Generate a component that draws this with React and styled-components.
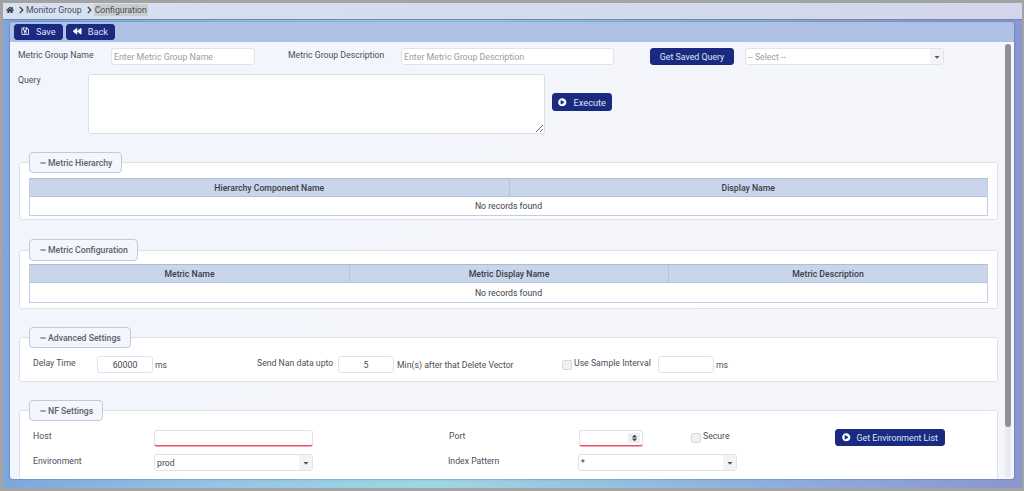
import React from 'react';
import styled, { createGlobalStyle } from 'styled-components';
import { FaHome, FaChevronRight, FaRegSave, FaBackward, FaPlayCircle, FaMinus, FaCaretDown, FaSort } from 'react-icons/fa';

const GlobalStyle = createGlobalStyle`
    html, body {
        margin: 0;
        padding: 0;
        height: 100%;
        overflow: hidden;
    }
    * {
        box-sizing: border-box;
    }
    body {
        font-family: Roboto, "Liberation Sans", sans-serif;
        font-size: 8.7px;
        color: #4b4f57;
    }
`;

const Page = styled.div`
    width: 1024px;
    height: 491px;
    border: solid #a3a3a3;
    border-width: 3px 2px 3px 3px;
    background: linear-gradient(90deg, #7ea6dc 0%, #93c4e4 20%, #a0d6e2 42%, #8fb4de 70%, #8b97d0 100%);
    display: flex;
    flex-direction: column;
    overflow: hidden;
`;

const Breadcrumb = styled.div`
    height: 17px;
    flex: none;
    background: linear-gradient(90deg, #d6e1f2, #d3d6ea);
    border-bottom: 1px solid #7088ad;
    display: flex;
    align-items: center;
    padding: 0 0 3px 3px;
    color: #4a4d55;
    font-size: 8.7px;
    svg {
        flex: none;
        color: #33363d;
    }
`;

const Chevron = styled(FaChevronRight)`
    width: 7px;
    height: 8px;
    margin: 1px 1px 0 4px;
`;

const Current = styled.span`
    background: #c9cbce;
    padding: 0 1px;
    line-height: 12px;
`;

const Panel = styled.div`
    flex: 1;
    min-height: 0;
    margin: 2px 8px 9px 7px;
    border-radius: 4px 4px 3px 3px;
    background: linear-gradient(135deg, #f2f5fc, #f5f6fb);
    box-shadow: 0 0 2px #46608e;
    display: flex;
    flex-direction: column;
    overflow: hidden;
    position: relative;
`;

const Toolbar = styled.div`
    height: 20px;
    flex: none;
    background: #aec0e3;
    display: flex;
    align-items: center;
    gap: 3px;
    padding: 0 0 1px 4px;
`;

const Button = styled.button`
    height: ${(p) => p.$h || 16}px;
    width: ${(p) => p.$w}px;
    margin: ${(p) => p.$margin || 0};
    flex: none;
    border: 1px solid #1b2a80;
    border-radius: 3px;
    background: #1a2a80;
    color: #dfe4f4;
    font: inherit;
    font-size: ${(p) => p.$fs || 8.8}px;
    padding: 0;
    display: inline-flex;
    align-items: center;
    justify-content: center;
    gap: ${(p) => p.$gap || 6}px;
    svg {
        width: 8.5px;
        height: 8.5px;
        flex: none;
        color: #fff;
    }
`;

const Body = styled.div`
    flex: 1;
    min-height: 0;
    overflow: hidden;
    padding: 6px 0 0 8px;
`;

const ScrollTrack = styled.div`
    position: absolute;
    top: 22px;
    right: 3px;
    bottom: 1px;
    width: 6px;
    background: #e9ebf0;
    border-radius: 3px;
`;

const ScrollThumb = styled.div`
    height: 383px;
    background: #918f8f;
    border-radius: 3px;
`;

const Row = styled.div`
    display: flex;
    align-items: ${(p) => p.$align || 'center'};
    height: ${(p) => p.$h || 17}px;
    margin-top: ${(p) => p.$mt || 0}px;
`;

const Label = styled.label`
    flex: none;
    width: ${(p) => (p.$w ? `${p.$w}px` : 'auto')};
    margin-left: ${(p) => p.$ml || 0}px;
    margin-top: ${(p) => p.$mt || 0}px;
    color: #4b4f57;
    white-space: nowrap;
`;

const Input = styled.input`
    flex: none;
    width: ${(p) => p.$w}px;
    height: ${(p) => p.$h || 17}px;
    margin-left: ${(p) => p.$ml || 0}px;
    border: 1px solid #e0e3ea;
    border-bottom-color: ${(p) => (p.$invalid ? '#ee4d68' : '#e0e3ea')};
    box-shadow: ${(p) => (p.$invalid ? '0 1px 0 #f7a3b2' : 'none')};
    border-radius: 3px;
    background: #fff;
    font: inherit;
    font-size: 8.8px;
    color: #44474e;
    padding: 0 2px;
    text-align: ${(p) => p.$align || 'left'};
    outline: none;
    &::placeholder {
        color: #9a9da3;
        opacity: 1;
    }
`;

const Query = styled.textarea`
    flex: none;
    width: 457px;
    height: 60px;
    border: 1px solid #dcdfe6;
    border-radius: 3px;
    background: #fff;
    outline: none;
    resize: both;
`;

const Select = styled.div`
    flex: none;
    width: ${(p) => p.$w}px;
    height: 17px;
    margin-left: ${(p) => p.$ml || 0}px;
    border: 1px solid #e0e3ea;
    border-radius: 3px;
    background: #fff;
    display: flex;
    align-items: center;
    justify-content: space-between;
    padding-left: 2px;
    overflow: hidden;
    color: ${(p) => (p.$muted ? '#9a9da3' : '#44474e')};
`;

const Caret = styled.span`
    width: 13px;
    height: 100%;
    background: #f3f4f6;
    display: flex;
    align-items: center;
    justify-content: center;
    color: #55585f;
    svg {
        width: 8px;
        height: 8px;
    }
`;

const Spinner = styled.div`
    flex: none;
    width: 64px;
    height: 16px;
    border: 1px solid #e0e3ea;
    border-bottom-color: #ee4d68;
    box-shadow: 0 1px 0 #f7a3b2;
    border-radius: 3px;
    background: #fff;
    display: flex;
    justify-content: flex-end;
    align-items: center;
    padding-right: 2px;
`;

const SpinBox = styled.span`
    width: 12px;
    height: 10px;
    background: #eeeff2;
    display: flex;
    align-items: center;
    justify-content: center;
    color: #444;
    svg {
        width: 7px;
        height: 8px;
    }
`;

const Section = styled.fieldset`
    width: 979px;
    margin: ${(p) => p.$mt}px 0 0 1px;
    padding: 0 9px ${(p) => p.$pb || 3}px;
    border: 1px solid #dde1e9;
    border-radius: 3px;
    background: #fff;
    min-width: 0;
`;

const Legend = styled.legend`
    height: ${(p) => p.$h || 21}px;
    margin: 0;
    padding: 0 9px 0 10px;
    border: 1px solid #bfc9e0;
    border-radius: 4px;
    background: #f3f6fc;
    color: #5d6068;
    font-weight: 500;
    font-size: 8.7px;
    display: flex;
    align-items: center;
    gap: 2px;
    svg {
        width: 6px;
        height: 6px;
        color: #4a4d55;
    }
`;

const Table = styled.div`
    border: 1px solid #c2cde3;
    border-top-color: #aebcd8;
    margin-top: ${(p) => p.$mt || 4}px;
`;

const HeadRow = styled.div`
    display: grid;
    grid-template-columns: repeat(${(p) => p.$cols}, 1fr);
    height: 18px;
    background: #c9d5ea;
    border-bottom: 1px solid #b4c2dd;
`;

const HeadCell = styled.div`
    display: flex;
    align-items: center;
    justify-content: center;
    color: #3a3d44;
    font-weight: 500;
    font-size: 8.7px;
    & + & {
        border-left: 1px solid #b4c2dd;
    }
`;

const EmptyRow = styled.div`
    height: ${(p) => p.$h || 18}px;
    display: flex;
    align-items: center;
    justify-content: center;
    color: #3e4147;
`;

const SettingsRow = styled.div`
    display: flex;
    align-items: center;
    height: 17px;
    margin-top: ${(p) => p.$mt || 0}px;
`;

const Check = styled.span`
    flex: none;
    width: 10px;
    height: 10px;
    margin-left: ${(p) => p.$ml || 0}px;
    margin-right: 2px;
    border: 1px solid #d5d8de;
    border-radius: 2px;
    background: #f0f1f3;
`;

const App = () => {
    return (
        <>
            <GlobalStyle />
            <Page>
                <Breadcrumb>
                    <FaHome size={8} />
                    <Chevron />
                    <span>Monitor Group</span>
                    <Chevron />
                    <Current>Configuration</Current>
                </Breadcrumb>
                <Panel>
                    <Toolbar>
                        <Button $w={49} $fs={9.2}><FaRegSave />Save</Button>
                        <Button $w={49} $fs={9.2}><FaBackward />Back</Button>
                    </Toolbar>
                    <Body>
                        <Row>
                            <Label $w={93} $mt={-3}>Metric Group Name</Label>
                            <Input $w={144} placeholder="Enter Metric Group Name" />
                            <Label $w={113} $ml={33} $mt={-3}>Metric Group Description</Label>
                            <Input $w={213} placeholder="Enter Metric Group Description" />
                            <Button $w={84} $h={17} $margin="0 0 0 36px">Get Saved Query</Button>
                            <Select $w={199} $ml={11} $muted>-- Select --<Caret><FaCaretDown /></Caret></Select>
                        </Row>
                        <Row $h={60} $mt={9} $align="flex-start">
                            <Label $w={70} $mt={1}>Query</Label>
                            <Query />
                            <Button $w={60} $h={18} $gap={7} $fs={9.2} $margin="19px 0 0 7px"><FaPlayCircle />Execute</Button>
                        </Row>

                        <Section $mt={18}>
                            <Legend>
                                <FaMinus />Metric Hierarchy
                            </Legend>
                            <Table $mt={5}>
                                <HeadRow $cols={2}>
                                    <HeadCell>Hierarchy Component Name</HeadCell>
                                    <HeadCell>Display Name</HeadCell>
                                </HeadRow>
                                <EmptyRow>No records found</EmptyRow>
                            </Table>
                        </Section>

                        <Section $mt={19} $pb={5}>
                            <Legend $h={22}>
                                <FaMinus />Metric Configuration
                            </Legend>
                            <Table $mt={3}>
                                <HeadRow $cols={3}>
                                    <HeadCell>Metric Name</HeadCell>
                                    <HeadCell>Metric Display Name</HeadCell>
                                    <HeadCell>Metric Description</HeadCell>
                                </HeadRow>
                                <EmptyRow $h={19}>No records found</EmptyRow>
                            </Table>
                        </Section>

                        <Section $mt={18} $pb={8}>
                            <Legend>
                                <FaMinus />Advanced Settings
                            </Legend>
                            <SettingsRow $mt={8}>
                                <Label $w={64} $ml={4} $mt={-3}>Delay Time</Label>
                                <Input $w={56} $align="center" defaultValue="60000" />
                                <Label $w={102} $ml={2}>ms</Label>
                                <Label $w={81} $mt={-3}>Send Nan data upto</Label>
                                <Input $w={56} $align="center" defaultValue="5" />
                                <Label $w={165} $ml={3}>Min(s) after that Delete Vector</Label>
                                <Check />
                                <Label $w={84} $mt={-3}>Use Sample Interval</Label>
                                <Input $w={56} />
                                <Label $ml={2}>ms</Label>
                            </SettingsRow>
                        </Section>

                        <Section $mt={18} $pb={8}>
                            <Legend>
                                <FaMinus />NF Settings
                            </Legend>
                            <SettingsRow $mt={8}>
                                <Label $w={121} $ml={4} $mt={-3}>Host</Label>
                                <Input $w={159} $h={16} $invalid />
                                <Label $w={130} $ml={136} $mt={-3}>Port</Label>
                                <Spinner><SpinBox><FaSort /></SpinBox></Spinner>
                                <Check $ml={48} />
                                <Label $w={132} $mt={-3}>Secure</Label>
                                <Button $w={110} $h={17} $gap={6}><FaPlayCircle />Get Environment List</Button>
                            </SettingsRow>
                            <SettingsRow $mt={8}>
                                <Label $w={121} $ml={4} $mt={-3}>Environment</Label>
                                <Select $w={159}>prod<Caret><FaCaretDown /></Caret></Select>
                                <Label $w={130} $ml={135} $mt={-3}>Index Pattern</Label>
                                <Select $w={159}>*<Caret><FaCaretDown /></Caret></Select>
                            </SettingsRow>
                        </Section>
                    </Body>
                    <ScrollTrack><ScrollThumb /></ScrollTrack>
                </Panel>
            </Page>
        </>
    );
};

export default App;
